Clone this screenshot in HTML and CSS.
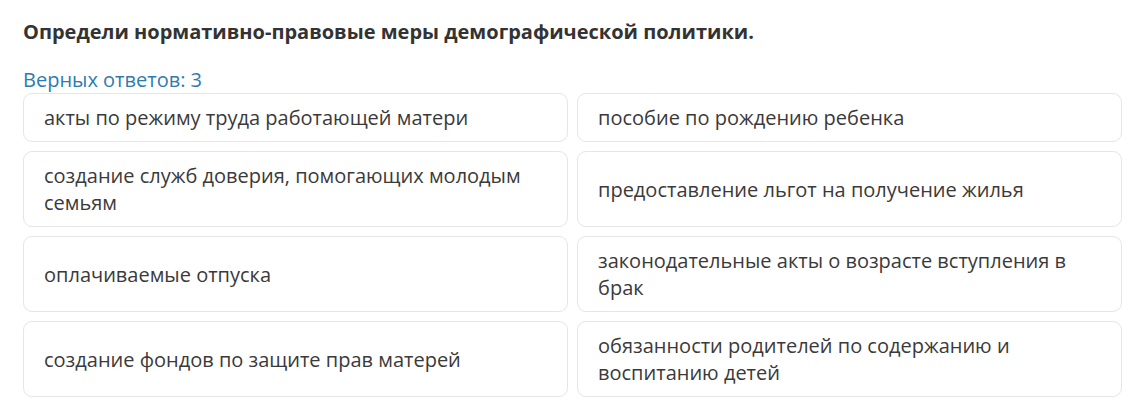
FILE: index.html
```html
<!DOCTYPE html>
<html lang="ru">
<head>
<meta charset="utf-8">
<link rel="stylesheet" href="styles.css">
</head>
<body>
<div class="page">
  <h1 class="title">Определи нормативно-правовые меры демографической политики.</h1>
  <div class="count">Верных ответов: 3</div>
  <div class="grid">
    <div class="card">акты по режиму труда работающей матери</div>
    <div class="card">пособие по рождению ребенка</div>
    <div class="card">создание служб доверия, помогающих молодым семьям</div>
    <div class="card">предоставление льгот на получение жилья</div>
    <div class="card">оплачиваемые отпуска</div>
    <div class="card">законодательные акты о возрасте вступления в брак</div>
    <div class="card">создание фондов по защите прав матерей</div>
    <div class="card">обязанности родителей по содержанию и воспитанию детей</div>
  </div>
</div>
</body>
</html>
```
FILE: styles.css
```css
html, body {
  margin: 0;
  padding: 0;
  background: #ffffff;
}
body {
  font-family: "Open Sans", "Noto Sans", sans-serif;
  color: #333333;
}
.page {
  padding: 18px 20px 0 23px;
}
.title {
  margin: 0;
  font-size: 20px;
  font-weight: 700;
  line-height: 27px;
  color: #333333;
}
.count {
  margin-top: 21px;
  font-size: 20px;
  line-height: 27px;
  color: #2e7bb0;
}
.grid {
  margin-top: 0;
  display: grid;
  grid-template-columns: 1fr 1fr;
  gap: 9px;
}
.card {
  display: flex;
  align-items: center;
  border: 1px solid #e6e6e6;
  border-radius: 9px;
  padding: 10px 20px;
  font-size: 20px;
  line-height: 27px;
  color: #3a3a3a;
}
```
